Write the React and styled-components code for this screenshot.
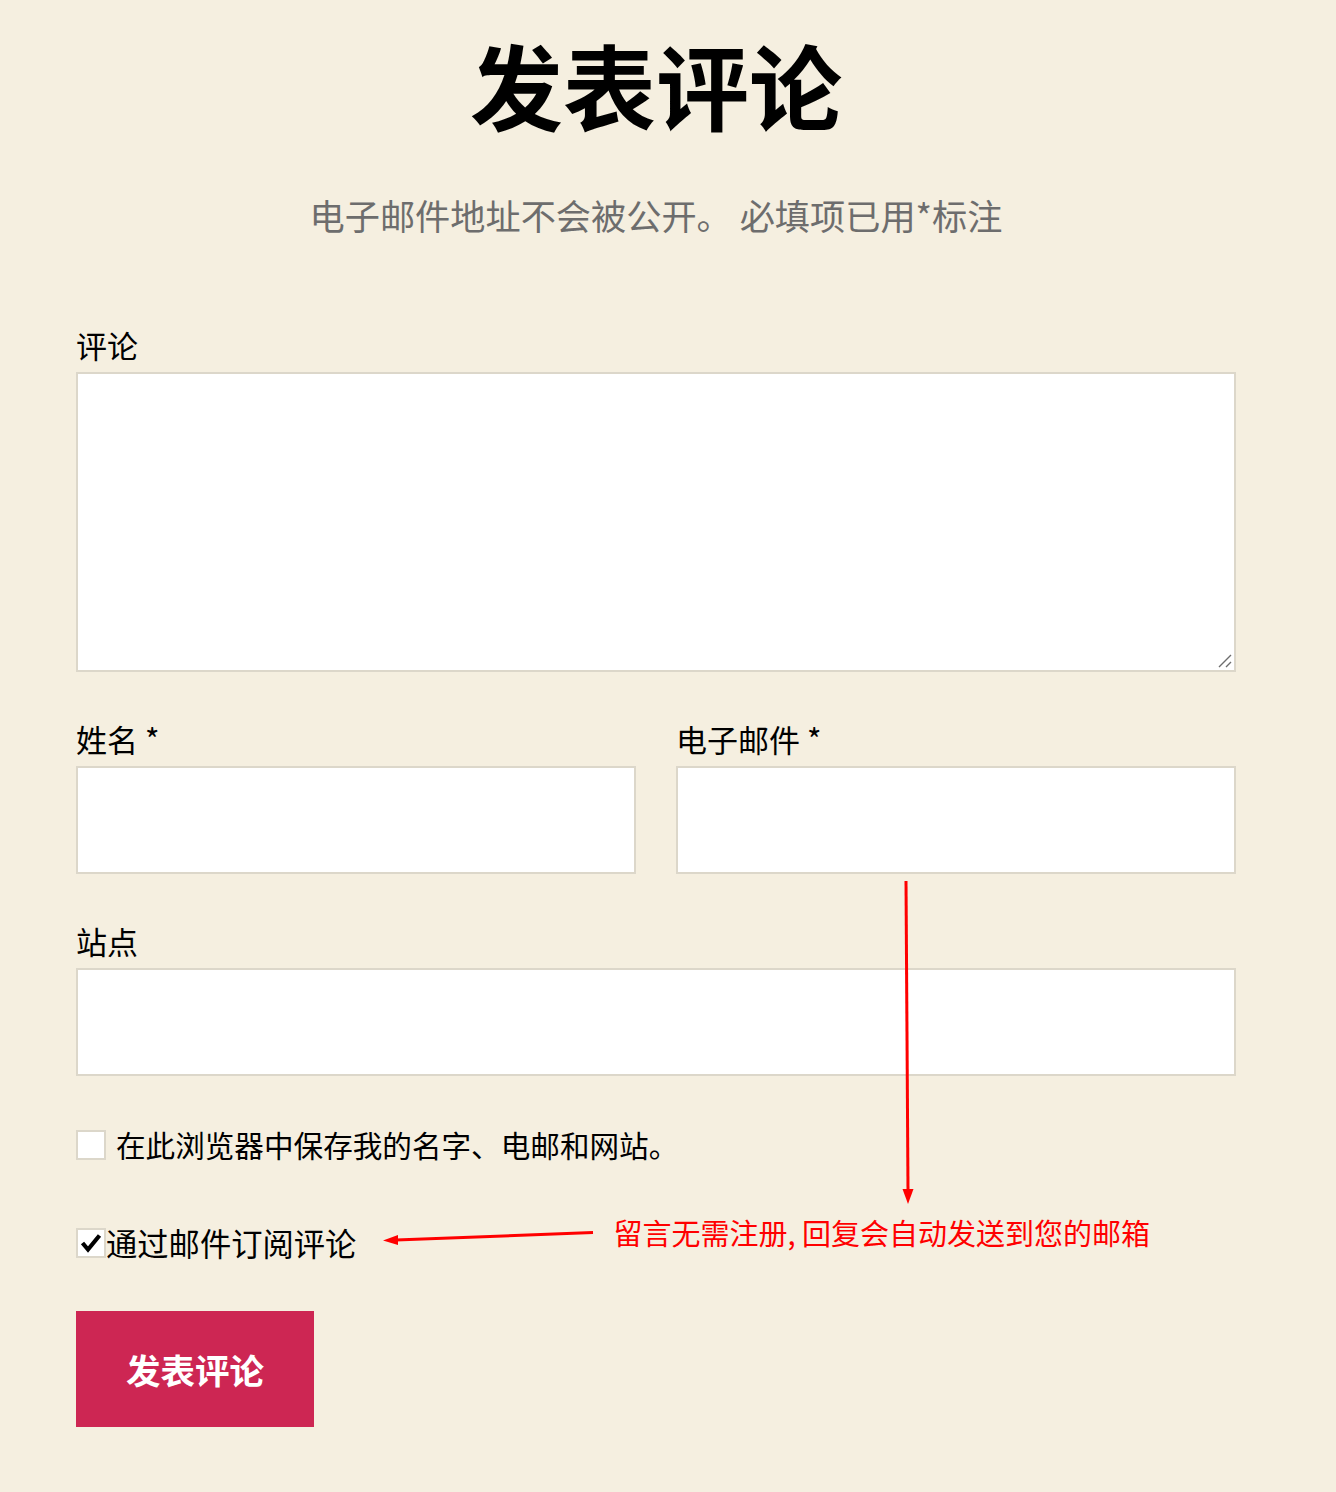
import React from 'react';
import styled, { createGlobalStyle } from 'styled-components';

const GlobalStyle = createGlobalStyle`
  html, body {
    margin: 0;
    padding: 0;
    background: #f5efe0;
  }
  body {
    font-family: "Noto Sans CJK SC", "Noto Sans", sans-serif;
    color: #000;
  }
  * { box-sizing: border-box; }
`;

const Page = styled.div`
  position: relative;
  width: 1336px;
  min-height: 1492px;
  background: #f5efe0;
  padding: 37px 100px 0 76px;
`;

const Title = styled.h2`
  margin: 0;
  font-size: 93px;
  line-height: 1;
  font-weight: 700;
  text-align: center;
`;

const Notice = styled.p`
  margin: 67px 0 0;
  font-size: 35.2px;
  line-height: 1;
  color: #6d6d6d;
  text-align: center;
`;

const Field = styled.div`
  display: flex;
  flex-direction: column;
  margin-top: ${(p) => p.$top}px;
`;

const Label = styled.label`
  font-size: 31px;
  line-height: 1;
  margin-bottom: 12px;
`;

const AreaWrap = styled.div`
  position: relative;
`;

const TextArea = styled.textarea`
  display: block;
  width: 100%;
  height: 300px;
  border: 2px solid #dcd7ca;
  background: #fff;
  margin: 0;
  padding: 12px;
  resize: none;
  font: inherit;
  outline: none;
`;

const Grip = styled.svg`
  position: absolute;
  right: 3px;
  bottom: 3px;
  pointer-events: none;
`;

const Input = styled.input`
  display: block;
  width: 100%;
  height: 108px;
  border: 2px solid #dcd7ca;
  background: #fff;
  margin: 0;
  padding: 12px;
  font: inherit;
  outline: none;
`;

const Pair = styled.div`
  display: grid;
  grid-template-columns: 1fr 1fr;
  column-gap: 40px;
  margin-top: 51px;
`;

const CheckRow = styled.div`
  display: flex;
  align-items: center;
  margin-top: ${(p) => p.$top}px;
`;

const CheckLabel = styled.label`
  display: flex;
  align-items: center;
  gap: ${(p) => p.$gap}px;
  font-size: ${(p) => p.$size}px;
  line-height: 1;
`;

const Box = styled.span`
  display: inline-flex;
  align-items: center;
  justify-content: center;
  width: 30px;
  height: 30px;
  flex-shrink: 0;
  background: #fff;
  border: 2px solid #dcd7ca;
`;

const Note = styled.span`
  font-size: 29px;
  line-height: 1;
  color: #ff0000;
  margin-left: 19px;
  margin-top: -20px;
`;

const SideArrow = styled.svg`
  display: block;
  margin-left: 26px;
  flex-shrink: 0;
`;

const Submit = styled.button`
  display: block;
  margin-top: 52px;
  width: 238px;
  height: 116px;
  border: none;
  background: #cd2653;
  color: #fff;
  font-family: inherit;
  font-size: 34.5px;
  font-weight: 700;
  cursor: pointer;
`;

const Overlay = styled.svg`
  position: absolute;
  left: 0;
  top: 0;
  pointer-events: none;
`;

const Check = () => (
  <svg width="22" height="22" viewBox="0 0 22 22">
    <path d="M2.5 11 L8 17.5 L19.5 3.5" fill="none" stroke="#000" strokeWidth="4.2" strokeLinejoin="miter" />
  </svg>
);

export default function App() {
  return (
    <Page>
      <GlobalStyle />
      <Title>发表评论</Title>
      <Notice>电子邮件地址不会被公开。 必填项已用*标注</Notice>

      <Field $top={97}>
        <Label>评论</Label>
        <AreaWrap>
          <TextArea />
          <Grip width="16" height="16" viewBox="0 0 16 16">
            <path d="M2 14 L14 2 M9 14 L14 9" stroke="#6d6d6d" strokeWidth="1.4" fill="none" />
          </Grip>
        </AreaWrap>
      </Field>

      <Pair>
        <Field $top={0}>
          <Label>姓名 *</Label>
          <Input type="text" />
        </Field>
        <Field $top={0}>
          <Label>电子邮件 *</Label>
          <Input type="email" />
        </Field>
      </Pair>

      <Field $top={51}>
        <Label>站点</Label>
        <Input type="url" />
      </Field>

      <CheckRow $top={54}>
        <CheckLabel $gap={10} $size={29.6}>
          <Box />
          在此浏览器中保存我的名字、电邮和网站。
        </CheckLabel>
      </CheckRow>

      <CheckRow $top={67}>
        <CheckLabel $gap={0} $size={31.3}>
          <Box>
            <Check />
          </Box>
          通过邮件订阅评论
        </CheckLabel>
        <SideArrow width="212" height="24" viewBox="0 0 212 24">
          <path d="M211 1.5 L14 9" stroke="#ff0000" strokeWidth="3" fill="none" />
          <path d="M1 9.5 L16 4 L16 14 Z" fill="#ff0000" />
        </SideArrow>
        <Note>留言无需注册, 回复会自动发送到您的邮箱</Note>
      </CheckRow>

      <Submit type="submit">发表评论</Submit>

      <Overlay width="1336" height="1492" viewBox="0 0 1336 1492">
        <path d="M906 881 L908 1190" stroke="#ff0000" strokeWidth="3" fill="none" />
        <path d="M902.5 1189 L913.5 1189 L908 1204 Z" fill="#ff0000" />
      </Overlay>
    </Page>
  );
}
